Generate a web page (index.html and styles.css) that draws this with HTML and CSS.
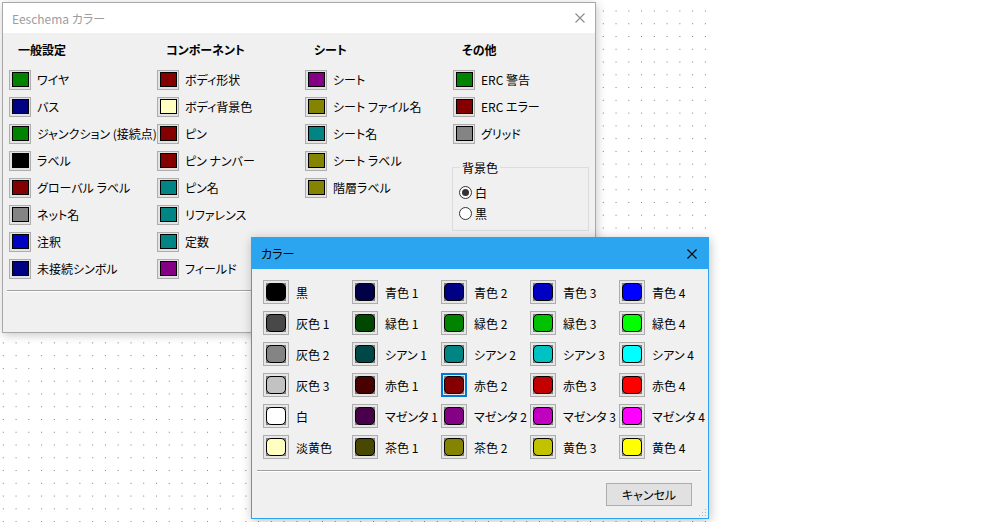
FILE: index.html
```html
<!DOCTYPE html>
<html lang="ja">
<head>
<meta charset="utf-8">
<title>Eeschema カラー</title>
<link rel="stylesheet" href="styles.css">
</head>
<body>
<div class="desktop">
  <div class="dots"></div>

  <div class="win win-main">
    <div class="titlebar">
      <span class="title">Eeschema カラー</span>
      <svg class="close" width="10" height="10" viewBox="0 0 10 10"><path d="M0.5 0.5L9.5 9.5M9.5 0.5L0.5 9.5" stroke="#8a8a8a" stroke-width="1.1" fill="none"/></svg>
    </div>
    <div class="main-body">
      <div class="cols">
        <div class="col">
          <div class="col-head">一般設定</div>
          <div class="row"><span class="sw"><i class="c-green"></i></span>ワイヤ</div>
          <div class="row"><span class="sw"><i class="c-blue"></i></span>バス</div>
          <div class="row"><span class="sw"><i class="c-green"></i></span>ジャンクション (接続点)</div>
          <div class="row"><span class="sw"><i class="c-black"></i></span>ラベル</div>
          <div class="row"><span class="sw"><i class="c-red"></i></span>グローバル ラベル</div>
          <div class="row"><span class="sw"><i class="c-gray"></i></span>ネット名</div>
          <div class="row"><span class="sw"><i class="c-lblue"></i></span>注釈</div>
          <div class="row"><span class="sw"><i class="c-blue"></i></span>未接続シンボル</div>
        </div>
        <div class="col">
          <div class="col-head">コンポーネント</div>
          <div class="row"><span class="sw"><i class="c-red"></i></span>ボディ形状</div>
          <div class="row"><span class="sw"><i class="c-lyellow"></i></span>ボディ背景色</div>
          <div class="row"><span class="sw"><i class="c-red"></i></span>ピン</div>
          <div class="row"><span class="sw"><i class="c-red"></i></span>ピン ナンバー</div>
          <div class="row"><span class="sw"><i class="c-cyan"></i></span>ピン名</div>
          <div class="row"><span class="sw"><i class="c-cyan"></i></span>リファレンス</div>
          <div class="row"><span class="sw"><i class="c-cyan"></i></span>定数</div>
          <div class="row"><span class="sw"><i class="c-magenta"></i></span>フィールド</div>
        </div>
        <div class="col">
          <div class="col-head">シート</div>
          <div class="row"><span class="sw"><i class="c-magenta"></i></span>シート</div>
          <div class="row"><span class="sw"><i class="c-brown"></i></span>シート ファイル名</div>
          <div class="row"><span class="sw"><i class="c-cyan"></i></span>シート名</div>
          <div class="row"><span class="sw"><i class="c-brown"></i></span>シート ラベル</div>
          <div class="row"><span class="sw"><i class="c-brown"></i></span>階層ラベル</div>
        </div>
        <div class="col">
          <div class="col-head">その他</div>
          <div class="row"><span class="sw"><i class="c-green"></i></span>ERC 警告</div>
          <div class="row"><span class="sw"><i class="c-red"></i></span>ERC エラー</div>
          <div class="row"><span class="sw"><i class="c-gray"></i></span>グリッド</div>
          <fieldset class="group">
            <legend>背景色</legend>
            <div class="radios">
              <div class="radio"><span class="rb checked"></span>白</div>
              <div class="radio"><span class="rb"></span>黒</div>
            </div>
          </fieldset>
        </div>
      </div>
      <div class="main-sep"></div>
    </div>
  </div>

  <div class="win win-color">
    <div class="titlebar">
      <span class="title">カラー</span>
      <svg class="close" width="10" height="10" viewBox="0 0 10 10"><path d="M0.5 0.5L9.5 9.5M9.5 0.5L0.5 9.5" stroke="#000" stroke-width="1.1" fill="none"/></svg>
    </div>
    <div class="color-body">
      <div class="cgrid">
        <div class="cell"><span class="csw"><span class="in"><b style="background:#000000"></b></span></span>黒</div>
        <div class="cell"><span class="csw"><span class="in"><b style="background:#000048"></b></span></span>青色 1</div>
        <div class="cell"><span class="csw"><span class="in"><b style="background:#000084"></b></span></span>青色 2</div>
        <div class="cell"><span class="csw"><span class="in"><b style="background:#0000c2"></b></span></span>青色 3</div>
        <div class="cell"><span class="csw"><span class="in"><b style="background:#0000ff"></b></span></span>青色 4</div>

        <div class="cell"><span class="csw"><span class="in"><b style="background:#484848"></b></span></span>灰色 1</div>
        <div class="cell"><span class="csw"><span class="in"><b style="background:#004800"></b></span></span>緑色 1</div>
        <div class="cell"><span class="csw"><span class="in"><b style="background:#008400"></b></span></span>緑色 2</div>
        <div class="cell"><span class="csw"><span class="in"><b style="background:#00c200"></b></span></span>緑色 3</div>
        <div class="cell"><span class="csw"><span class="in"><b style="background:#00ff00"></b></span></span>緑色 4</div>

        <div class="cell"><span class="csw"><span class="in"><b style="background:#848484"></b></span></span>灰色 2</div>
        <div class="cell"><span class="csw"><span class="in"><b style="background:#004848"></b></span></span>シアン 1</div>
        <div class="cell"><span class="csw"><span class="in"><b style="background:#008484"></b></span></span>シアン 2</div>
        <div class="cell"><span class="csw"><span class="in"><b style="background:#00c2c2"></b></span></span>シアン 3</div>
        <div class="cell"><span class="csw"><span class="in"><b style="background:#00ffff"></b></span></span>シアン 4</div>

        <div class="cell"><span class="csw"><span class="in"><b style="background:#c2c2c2"></b></span></span>灰色 3</div>
        <div class="cell"><span class="csw"><span class="in"><b style="background:#480000"></b></span></span>赤色 1</div>
        <div class="cell"><span class="csw sel"><span class="in"><b style="background:#840000"></b></span></span>赤色 2</div>
        <div class="cell"><span class="csw"><span class="in"><b style="background:#c20000"></b></span></span>赤色 3</div>
        <div class="cell"><span class="csw"><span class="in"><b style="background:#ff0000"></b></span></span>赤色 4</div>

        <div class="cell"><span class="csw"><span class="in"><b style="background:#ffffff"></b></span></span>白</div>
        <div class="cell"><span class="csw"><span class="in"><b style="background:#480048"></b></span></span>マゼンタ 1</div>
        <div class="cell"><span class="csw"><span class="in"><b style="background:#840084"></b></span></span>マゼンタ 2</div>
        <div class="cell"><span class="csw"><span class="in"><b style="background:#c200c2"></b></span></span>マゼンタ 3</div>
        <div class="cell"><span class="csw"><span class="in"><b style="background:#ff00ff"></b></span></span>マゼンタ 4</div>

        <div class="cell"><span class="csw"><span class="in"><b style="background:#ffffc2"></b></span></span>淡黄色</div>
        <div class="cell"><span class="csw"><span class="in"><b style="background:#484800"></b></span></span>茶色 1</div>
        <div class="cell"><span class="csw"><span class="in"><b style="background:#848400"></b></span></span>茶色 2</div>
        <div class="cell"><span class="csw"><span class="in"><b style="background:#c2c200"></b></span></span>黄色 3</div>
        <div class="cell"><span class="csw"><span class="in"><b style="background:#ffff00"></b></span></span>黄色 4</div>
      </div>
      <div class="csep"></div>
      <div class="btn-row"><button class="btn" type="button">キャンセル</button></div>
    </div>
    <svg class="grip" width="9" height="9" viewBox="0 0 9 9">
      <rect x="7" y="1" width="1" height="1" fill="#b5b5b5"/>
      <rect x="4" y="4" width="1" height="1" fill="#b5b5b5"/>
      <rect x="7" y="4" width="1" height="1" fill="#b5b5b5"/>
      <rect x="1" y="7" width="1" height="1" fill="#b5b5b5"/>
      <rect x="4" y="7" width="1" height="1" fill="#b5b5b5"/>
      <rect x="7" y="7" width="1" height="1" fill="#b5b5b5"/>
    </svg>
  </div>
</div>
</body>
</html>
```

FILE: styles.css
```css
* { box-sizing: border-box; }
html, body { margin: 0; padding: 0; }
body {
  width: 1000px;
  height: 522px;
  overflow: hidden;
  background: #fff;
  font-family: "Noto Sans CJK JP", "Noto Sans", sans-serif;
  font-size: 12px;
  color: #000;
  font-feature-settings: "palt";
}
.desktop { position: relative; width: 1000px; height: 522px; }
.dots {
  width: 711px;
  height: 522px;
  background-image: radial-gradient(circle, #7a7a7a 0.65px, transparent 0.95px);
  background-size: 12.77px 12.77px;
  background-position: -3.1px 4.6px;
}

.win { position: absolute; display: flex; flex-direction: column; background: #f0f0f0; }
.titlebar { flex: none; display: flex; align-items: center; justify-content: space-between; }
.close { display: block; flex: none; }

/* main dialog */
.win-main {
  left: 2px; top: 2px; width: 594px; height: 331px;
  border: 1px solid #a8a8a8;
  box-shadow: 1px 2px 9px rgba(0,0,0,0.22);
}
.win-main .titlebar { height: 30px; background: #fff; padding: 0 10px 0 9px; color: #9d9d9d; }
.main-body { flex: 1; padding: 8px 6px 0 5px; }
.cols { display: grid; grid-template-columns: repeat(4, 148px); margin-left: 1px; }
.col-head { height: 18px; line-height: 18px; font-weight: bold; padding-left: 9px; margin-bottom: 7px; }
.row { height: 27px; display: flex; align-items: center; white-space: nowrap; }
.sw {
  flex: none; width: 22px; height: 20px; margin-right: 6px;
  border: 1px solid #adadad; background: #e3e3e3;
  display: flex; align-items: center; justify-content: center;
}
.sw i { display: block; width: 17px; height: 15px; border: 1px solid #000; }
.c-green { background: #008400; }
.c-blue { background: #000084; }
.c-lblue { background: #0000c2; }
.c-black { background: #000; }
.c-red { background: #840000; }
.c-gray { background: #848484; }
.c-cyan { background: #008484; }
.c-magenta { background: #840084; }
.c-brown { background: #848400; }
.c-lyellow { background: #ffffc2; }

.group {
  margin: 12px 0 0 -1px; width: 137px;
  border: 1px solid #dcdcdc; padding: 0 0 6px 6px; min-width: 0;
}
.group legend { padding: 0 2px; margin-left: 1px; line-height: 17px; height: 17px; }
.radios { padding-top: 6px; }
.radio { height: 21px; display: flex; align-items: center; }
.rb {
  flex: none; width: 13px; height: 13px; margin-right: 3px;
  border: 1px solid #333; border-radius: 50%; background: #fff;
  display: flex; align-items: center; justify-content: center;
}
.rb.checked::after { content: ""; width: 7px; height: 7px; border-radius: 50%; background: #333; }
.main-sep { margin: 8px 0 0 -1px; border-top: 1px solid #a0a0a0; border-bottom: 1px solid #fff; }

/* colour dialog */
.win-color {
  left: 251px; top: 237px; width: 458px; height: 282px;
  border: 1px solid #2ba5f0;
  box-shadow: 1px 2px 10px rgba(0,0,0,0.25);
}
.win-color .titlebar { height: 31px; background: #2ba5f0; padding: 0 11px 0 9px; }
.color-body { flex: 1; padding: 11px 0 0 11px; display: flex; flex-direction: column; }
.cgrid { display: grid; grid-template-columns: repeat(5, 89px); grid-auto-rows: 24px; row-gap: 7px; }
.cell { display: flex; align-items: center; white-space: nowrap; }
.csw {
  flex: none; width: 26px; height: 24px; margin-right: 7px;
  border: 1px solid #adadad; background: #e6e6e6; padding: 2px;
}
.csw.sel { border: 2px solid #0078d7; padding: 1px; }
.csw .in { display: block; width: 100%; height: 100%; background: #7f7f7f; }
.csw .in b { display: block; width: 100%; height: 100%; border: 1px solid #000; border-radius: 5px; }
.csep { margin: 11px 7px 0 -6px; border-top: 1px solid #a0a0a0; border-bottom: 1px solid #fff; }
.btn-row { display: flex; justify-content: flex-end; padding: 11px 16px 0 0; }
.btn {
  width: 86px; height: 23px; margin: 0; padding: 0;
  border: 1px solid #adadad; background: #e1e1e1;
  font: inherit; color: #000; font-feature-settings: "palt";
}
.grip { position: absolute; right: 1px; bottom: 1px; }
```
